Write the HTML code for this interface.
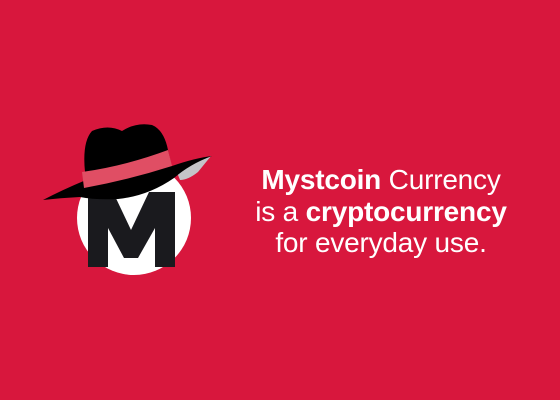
<!DOCTYPE html>
<html><head><style>
body{margin:0;width:560px;height:400px;background:#d8173d;overflow:hidden;position:relative;font-family:"Liberation Sans",sans-serif}
.t{position:absolute;left:230px;width:302px;top:164px;text-align:center;color:#fff;font-size:28px;line-height:31.5px;letter-spacing:-0.2px}
b{font-weight:700}
</style></head><body>
<svg width="560" height="400" style="position:absolute;left:0;top:0">
<circle cx="134" cy="218" r="57" fill="#fff"/>
<path d="M88 267 V192 H113 L131 230 L149 192 H175 V267 H155 V228 L138 258 H124 L108 228 V267 Z" fill="#1a1a1e"/>
<path d="M176 170 L211 156 L198 172 Q188 180 180 180 Z" fill="#c4c4c8"/>
<path d="M85 172 Q82 142 92 131 Q108 124 122 131 Q136 122 152 125 Q164 130 168 150 L172 168 Z" fill="#000"/>
<path d="M43 200 Q62 190 86 180 L172 166 Q195 158 212 156 Q190 164 174 178 Q148 196 118 199 Q95 200 80 197 Q60 198 43 200 Z" fill="#000"/>
<path d="M82 172 Q125 166 168 150 L172 166 Q128 180 84 188 Z" fill="#e04e64"/>
</svg>
<div class="t"><b>Mystcoin</b> Currency<br>is a <b>cryptocurrency</b><br>for everyday use.</div>
</body></html>
